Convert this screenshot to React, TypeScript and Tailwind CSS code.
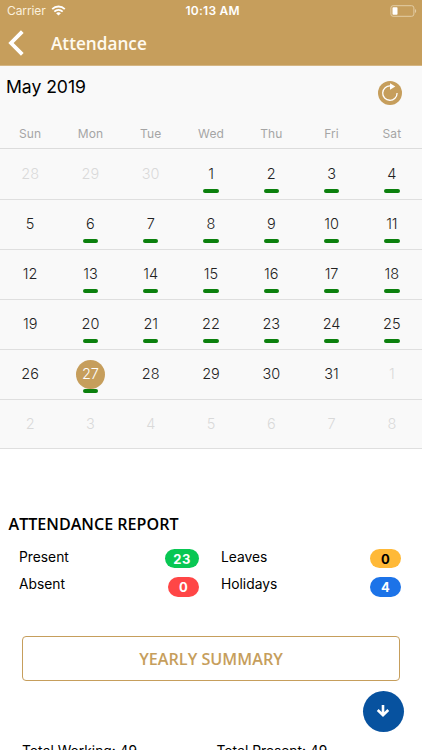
const weekDays = ["Sun", "Mon", "Tue", "Wed", "Thu", "Fri", "Sat"];

interface Day {
    day: number;
    muted?: boolean;
    present?: boolean;
    selected?: boolean;
}

// 28 apr - 8 jun, six weeks
const days: Day[] = Array.from({ length: 42 }, (_, i) => {
    if (i < 3) return { day: 28 + i, muted: true };
    const day = i - 2;
    if (day > 31) return { day: day - 31, muted: true };
    return { day, present: day <= 27 && (i % 7 !== 0), selected: day === 27 };
});

const StatusBar = () => {
    return (
        <div className="relative flex h-[22px] items-center justify-between pl-[7px] pr-[5px] text-white">
            <div className="flex items-center">
                <span className="text-[12px] leading-[22px] -tracking-[0.1px] text-[#fbf0dc]">Carrier</span>
                <svg className="ml-[5px] -mt-[1px] h-[11px] w-[15px]" viewBox="0 0 14 11" fill="none">
                    <path d="M0.7 4.2C4.2 0.6 9.8 0.6 13.3 4.2" stroke="#fff" strokeWidth="1.8" />
                    <path d="M2.8 6.7C5.2 4.4 8.8 4.4 11.2 6.7" stroke="#fff" strokeWidth="1.8" />
                    <path d="M4.6 8.2C6 7 8 7 9.4 8.2L7 10.6Z" fill="#fff" />
                </svg>
            </div>
            <span className="absolute left-[185.5px] text-[12px] font-semibold leading-[22px] tracking-[0.25px]">10:13 AM</span>
            <svg className="h-[12px] w-[27px]" viewBox="0 0 27 12" fill="none">
                <rect x="0.9" y="0.7" width="23" height="10.6" rx="2.2" stroke="#e3cda5" />
                <rect x="2.5" y="2.3" width="5" height="7.4" rx="0.8" fill="#fff" />
                <path d="M25 4V8C26.6 7.4 26.6 4.6 25 4Z" fill="#e3cda5" />
            </svg>
        </div>
    );
};

const Header = () => {
    return (
        <header className="h-[66px] border-b border-[#d5b684] bg-[#c69e5c]">
            <StatusBar />
            <div className="flex h-[43px] items-center">
                <svg className="ml-2 -mt-[1px] h-[26px] w-4" viewBox="0 0 16 26" fill="none">
                    <path d="M14.3 1.6L3 13L14.3 24.4" stroke="#fff" strokeWidth="3.8" />
                </svg>
                <h1 className="ml-[27px] font-['Open_Sans'] text-[17.2px] font-semibold leading-6 text-[#fffaf0]">Attendance</h1>
            </div>
        </header>
    );
};

const DayCell = ({ day, muted, present, selected }: Day) => {
    return (
        <div className="flex flex-col items-center pt-[9.5px]">
            <span
                className={`flex size-[29px] items-center justify-center rounded-full text-[14.5px] font-light ${
                    selected ? "bg-[#c69e5c] text-white" : muted ? "text-[#d9d9d9]" : "text-[#222]"
                }`}
            >
                <span className="-mt-[1px]">{day}</span>
            </span>
            {present && <span className="mt-[0.5px] h-[4px] w-[15.5px] rounded-full bg-[#0b800d]" />}
        </div>
    );
};

const Calendar = () => {
    return (
        <section className="h-[383px] bg-[#f9f9f9]">
            <div className="flex h-[56px] justify-between pl-[6px] pr-5">
                <h2 className="mt-[9px] text-[17.6px] leading-6 -tracking-[0.05px] text-black">May 2019</h2>
                <svg className="mt-[15px] size-6" viewBox="0 0 24 24" fill="none">
                    <circle cx="12" cy="12" r="12" fill="#c69e5c" />
                    <path d="M12.5 4.9A7.2 7.2 0 1 0 19.1 12" stroke="#fff" strokeWidth="1.3" />
                    <path d="M12 2.2L17.3 5.5L12 8.8Z" fill="#fff" />
                </svg>
            </div>
            <div className="grid h-[27px] grid-cols-7 border-b border-[#dcdcdc] text-center text-[12px] leading-[23px] tracking-[0.1px] text-[#a5a5a5]">
                {weekDays.map((name) => (
                    <span key={name}>{name}</span>
                ))}
            </div>
            {[0, 1, 2, 3, 4, 5].map((week) => (
                <div
                    key={week}
                    className={`grid grid-cols-7 border-b border-[#dfdfdf] ${week === 0 ? "h-[51px] pt-[1px]" : week === 5 ? "h-[49px]" : "h-[50px]"}`}
                >
                    {days.slice(week * 7, week * 7 + 7).map((item, i) => (
                        <DayCell key={i} {...item} />
                    ))}
                </div>
            ))}
        </section>
    );
};

const Report = () => {
    return (
        <section className="pt-[63px]">
            <h3 className="pl-[8.5px] font-['Open_Sans'] text-[16.1px] font-semibold leading-6 text-black">ATTENDANCE REPORT</h3>
            <div className="mt-[9px] grid grid-cols-[180px_180px] gap-x-[22px] gap-y-[7px] pl-[19px] text-[13.8px] leading-5 text-black">
                <p className="flex justify-between">
                    <span className="mt-[2px]">Present</span>
                    <span className="mt-[4px] h-[19px] w-[34px] rounded-full bg-[#08c753] text-center text-[13px] font-bold tracking-[0.5px] text-white">23</span>
                </p>
                <p className="flex justify-between">
                    <span className="mt-[2px]">Leaves</span>
                    <span className="mt-[4px] h-[19px] w-[31px] rounded-full bg-[#ffb937] text-center text-[13px] font-bold text-black">0</span>
                </p>
                <p className="flex h-[20px] justify-between">
                    <span className="-mt-[1px]">Absent</span>
                    <span className="mt-[2px] h-[20px] w-[31px] rounded-full bg-[#ff4646] text-center text-[13px] font-bold text-white">0</span>
                </p>
                <p className="flex h-[20px] justify-between">
                    <span className="-mt-[1px]">Holidays</span>
                    <span className="mt-[2px] h-[20px] w-[31px] rounded-full bg-[#1c73e8] text-center text-[13px] font-bold text-white">4</span>
                </p>
            </div>
        </section>
    );
};

export default function App() {
    return (
        <div className="relative h-[750px] w-[422px] overflow-hidden bg-white font-['Inter',sans-serif]">
            <Header />
            <Calendar />
            <Report />
            <button className="ml-[22px] mt-[41px] block h-[45px] w-[378px] rounded-[4px] border border-[#c69e5c] pt-[1px] font-['Open_Sans'] text-[16.2px] font-semibold text-[#c69e5c]">
                YEARLY SUMMARY
            </button>
            <div className="mt-[60px] flex pl-[22px] text-[13.8px] leading-5 text-black">
                <span className="w-[194.5px]">Total Working: 49</span>
                <span>Total Present: 49</span>
            </div>
            <button className="absolute left-[362.5px] top-[690.5px] flex size-[41px] items-center justify-center rounded-full bg-[#07529f]">
                <svg className="size-[14px]" viewBox="0 0 14 14" fill="none">
                    <path d="M7 1V11M1.7 6L7 11.2L12.3 6" stroke="#fff" strokeWidth="2.6" />
                </svg>
            </button>
        </div>
    );
}
